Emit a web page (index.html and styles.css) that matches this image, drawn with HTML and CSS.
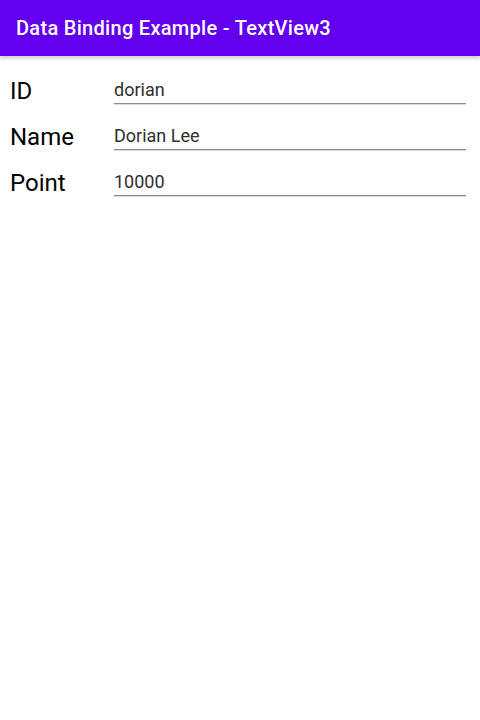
FILE: index.html
```html
<!DOCTYPE html>
<html>
<head>
<meta charset="utf-8">
<link rel="stylesheet" href="styles.css">
</head>
<body>
<header class="appbar">Data Binding Example - TextView3</header>
<main class="form">
  <div class="row"><span class="label">ID</span><span class="field">dorian</span></div>
  <div class="row"><span class="label">Name</span><span class="field">Dorian Lee</span></div>
  <div class="row"><span class="label">Point</span><span class="field">10000</span></div>
</main>
</body>
</html>
```
FILE: styles.css
```css
html, body {
  margin: 0;
  padding: 0;
  background: #fff;
  font-family: Roboto, "Liberation Sans", sans-serif;
}
.appbar {
  height: 56px;
  line-height: 56px;
  background: #6200ee;
  color: #fff;
  font-size: 20px;
  font-weight: 500;
  letter-spacing: 0.3px;
  padding-left: 16px;
  box-shadow: 0 2px 4px rgba(0,0,0,0.22);
  position: relative;
}
.form {
  padding: 3px 14px 0 10px;
}
.row {
  height: 46px;
  display: flex;
  align-items: flex-end;
}
.label {
  width: 104px;
  flex: none;
  font-size: 24px;
  line-height: 28px;
  color: #000;
  margin-bottom: 0;
}
.field {
  flex: 1;
  font-size: 18px;
  line-height: 21px;
  color: #2e2e2e;
  padding-bottom: 3px;
  border-bottom: 1px solid #8a8a8a;
  box-shadow: 0 1px 0 #dcdcdc;
  margin-bottom: 1px;
}
```
